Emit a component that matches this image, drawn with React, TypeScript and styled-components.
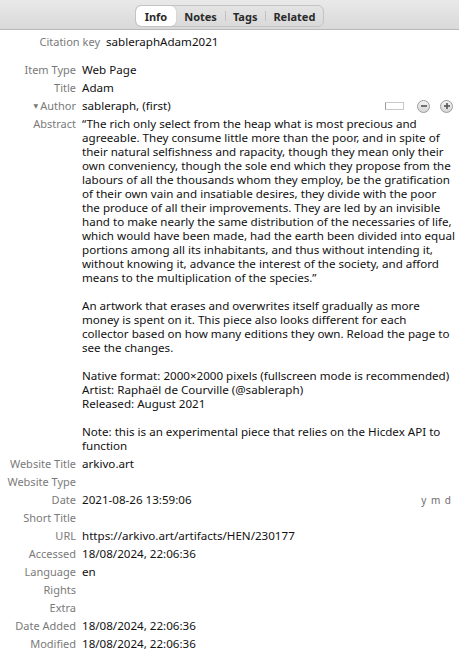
import React from 'react';
import styled, { createGlobalStyle } from 'styled-components';

const GlobalStyle = createGlobalStyle`
    html, body {
        margin: 0;
        padding: 0;
        background: #fff;
    }
    body {
        font-family: "Noto Sans", "DejaVu Sans", sans-serif;
        font-size: 11px;
        color: #000;
    }
`;

const Pane = styled.div`
    width: 459px;
    height: 665px;
    overflow: hidden;
    background: #fff;
`;

const Header = styled.div`
    height: 30px;
    box-sizing: border-box;
    display: flex;
    justify-content: center;
    align-items: flex-start;
    padding-top: 5px;
    background: linear-gradient(#e9e9e9, #d9d9d9);
    border-bottom: 1px solid #b9b9b9;
`;

const Segmented = styled.div`
    display: flex;
    height: 22px;
    box-sizing: border-box;
    margin-left: 0;
    border: 1px solid #c4c4c4;
    border-radius: 6px;
    background: linear-gradient(#e4e4e4, #dadada);
    overflow: hidden;
`;

const Tab = styled.div<{ $active?: boolean; $sep?: boolean }>`
    display: flex;
    align-items: center;
    justify-content: center;
    padding: 0 ${p => (p.$active ? '9px' : '8px')};
    font-weight: 700;
    font-size: 11px;
    color: #2a2a2a;
    background: ${p => (p.$active ? '#fff' : 'transparent')};
    border-radius: ${p => (p.$active ? '5px' : '0')};
    box-shadow: ${p => (p.$active ? '0 0 1px rgba(0,0,0,0.35)' : 'none')};
    position: relative;

    ${p => p.$sep && `
        &::before {
            content: '';
            position: absolute;
            left: 0;
            top: 5px;
            bottom: 5px;
            width: 1px;
            background: #c2c2c2;
        }
    `}
`;

const CitationRow = styled.div`
    display: grid;
    grid-template-columns: 100px 1fr;
    column-gap: 6px;
    margin-top: 3px;
    padding: 2px 0;
    line-height: 14px;
`;

const Fields = styled.div`
    margin-top: 10px;
    display: flex;
    flex-direction: column;
`;

const Row = styled.div`
    display: grid;
    grid-template-columns: 76px 1fr;
    column-gap: 6px;
    padding: 2px 0;
    line-height: 14px;
    position: relative;
`;

const Label = styled.div`
    text-align: right;
    color: #7a7a7a;
    white-space: nowrap;
`;

const Twisty = styled.span`
    font-size: 6px;
    color: #777;
    margin-right: 2px;
    vertical-align: 2px;
`;

const Value = styled.div<{ $pre?: boolean }>`
    color: #111;
    font-size: 11.6px;
    white-space: ${p => (p.$pre ? 'pre' : 'nowrap')};
    padding-right: 4px;
`;

const Controls = styled.div`
    position: absolute;
    right: 6px;
    top: 2px;
    display: flex;
    align-items: center;
    gap: 10px;
    height: 14px;
`;

const TypeBox = styled.div`
    width: 17px;
    height: 6px;
    border: 1px solid #c8c8c8;
    border-left-color: #9a9a9a;
    background: #fff;
    margin-right: 3px;
`;

const CircleButton = styled.div`
    width: 13px;
    height: 13px;
    border-radius: 50%;
    border: 1px solid #9a9a9a;
    background: linear-gradient(#f4f4f4, #d6d6d6);
    box-sizing: border-box;
    display: flex;
    align-items: center;
    justify-content: center;
`;

const DateHint = styled.span`
    position: absolute;
    right: 7px;
    top: 2px;
    color: #6d6d6d;
    font-size: 10px;
    letter-spacing: 1px;
`;

const abstractLines = [
    '“The rich only select from the heap what is most precious and',
    'agreeable. They consume little more than the poor, and in spite of',
    'their natural selfishness and rapacity, though they mean only their',
    'own conveniency, though the sole end which they propose from the',
    'labours of all the thousands whom they employ, be the gratification',
    'of their own vain and insatiable desires, they divide with the poor',
    'the produce of all their improvements. They are led by an invisible',
    'hand to make nearly the same distribution of the necessaries of life,',
    'which would have been made, had the earth been divided into equal',
    'portions among all its inhabitants, and thus without intending it,',
    'without knowing it, advance the interest of the society, and afford',
    'means to the multiplication of the species.”',
    '',
    'An artwork that erases and overwrites itself gradually as more',
    'money is spent on it. This piece also looks different for each',
    'collector based on how many editions they own. Reload the page to',
    'see the changes.',
    '',
    'Native format: 2000×2000 pixels (fullscreen mode is recommended)',
    'Artist: Raphaël de Courville (@sableraph)',
    'Released: August 2021',
    '',
    'Note: this is an experimental piece that relies on the Hicdex API to',
    'function',
];

const fieldsAfter: [string, string][] = [
    ['Website Title', 'arkivo.art'],
    ['Website Type', ''],
    ['Date', '2021-08-26 13:59:06'],
    ['Short Title', ''],
    ['URL', 'https://arkivo.art/artifacts/HEN/230177'],
    ['Accessed', '18/08/2024, 22:06:36'],
    ['Language', 'en'],
    ['Rights', ''],
    ['Extra', ''],
    ['Date Added', '18/08/2024, 22:06:36'],
    ['Modified', '18/08/2024, 22:06:36'],
];

const MinusIcon = () => (
    <svg width="8" height="8" viewBox="0 0 8 8">
        <rect x="1" y="3.2" width="6" height="1.6" fill="#555" />
    </svg>
);

const PlusIcon = () => (
    <svg width="8" height="8" viewBox="0 0 8 8">
        <rect x="1" y="3.2" width="6" height="1.6" fill="#555" />
        <rect x="3.2" y="1" width="1.6" height="6" fill="#555" />
    </svg>
);

export default function App() {
    return (
        <>
            <GlobalStyle />
            <Pane>
                <Header>
                    <Segmented>
                        <Tab $active>Info</Tab>
                        <Tab>Notes</Tab>
                        <Tab $sep>Tags</Tab>
                        <Tab $sep>Related</Tab>
                    </Segmented>
                </Header>

                <CitationRow>
                    <Label>Citation key</Label>
                    <Value>sableraphAdam2021</Value>
                </CitationRow>

                <Fields>
                    <Row>
                        <Label>Item Type</Label>
                        <Value>Web Page</Value>
                    </Row>
                    <Row>
                        <Label>Title</Label>
                        <Value>Adam</Value>
                    </Row>
                    <Row>
                        <Label><Twisty>▼</Twisty>Author</Label>
                        <Value>sableraph, (first)</Value>
                        <Controls>
                            <TypeBox />
                            <CircleButton><MinusIcon /></CircleButton>
                            <CircleButton><PlusIcon /></CircleButton>
                        </Controls>
                    </Row>
                    <Row>
                        <Label>Abstract</Label>
                        <Value $pre>{abstractLines.join('\n')}</Value>
                    </Row>
                    {fieldsAfter.map(([label, value]) => (
                        <Row key={label}>
                            <Label>{label}</Label>
                            <Value>{value}</Value>
                            {label === 'Date' && <DateHint>y m d</DateHint>}
                        </Row>
                    ))}
                </Fields>
            </Pane>
        </>
    );
}
